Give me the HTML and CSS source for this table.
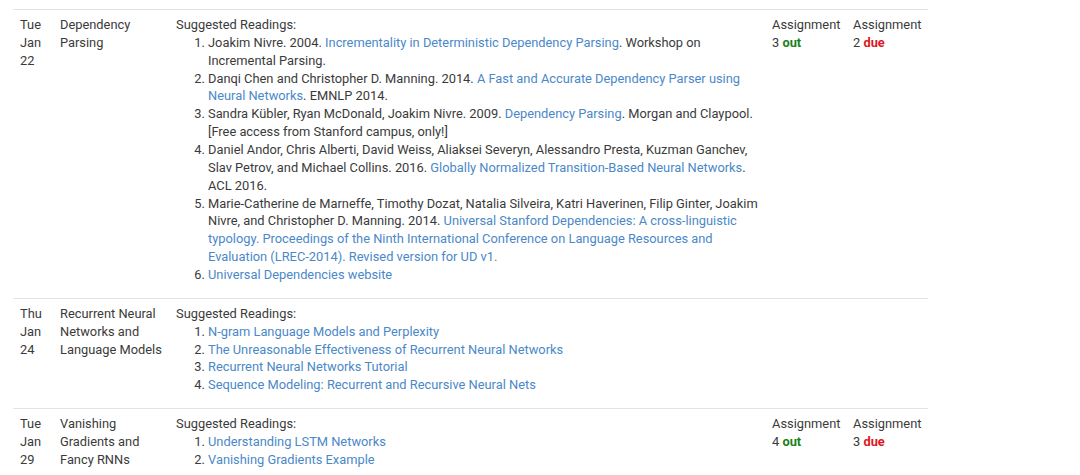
FILE: index.html
```html
<!DOCTYPE html>
<html>
<head>
<meta charset="utf-8">
<link rel="stylesheet" href="styles.css">
</head>
<body>
<div class="page">
<table class="schedule">
  <colgroup>
    <col class="c-date"><col class="c-topic"><col class="c-read"><col class="c-out"><col class="c-due">
  </colgroup>
  <tr>
    <td>Tue<br>Jan<br>22</td>
    <td>Dependency Parsing</td>
    <td>Suggested Readings:
      <ol>
        <li>Joakim Nivre. 2004. <a href="#">Incrementality in Deterministic Dependency Parsing</a>. Workshop on Incremental Parsing.</li>
        <li>Danqi Chen and Christopher D. Manning. 2014. <a href="#">A Fast and Accurate Dependency Parser using Neural Networks</a>. EMNLP 2014.</li>
        <li>Sandra Kübler, Ryan McDonald, Joakim Nivre. 2009. <a href="#">Dependency Parsing</a>. Morgan and Claypool. [Free access from Stanford campus, only!]</li>
        <li>Daniel Andor, Chris Alberti, David Weiss, Aliaksei Severyn, Alessandro Presta, Kuzman Ganchev, Slav Petrov, and Michael Collins. 2016. <a href="#">Globally Normalized Transition-Based Neural Networks</a>. ACL 2016.</li>
        <li>Marie-Catherine de Marneffe, Timothy Dozat, Natalia Silveira, Katri Haverinen, Filip Ginter, Joakim Nivre, and Christopher D. Manning. 2014. <a href="#">Universal Stanford Dependencies: A cross-linguistic typology. Proceedings of the Ninth International Conference on Language Resources and Evaluation (LREC-2014). Revised version for UD v1.</a></li>
        <li><a href="#">Universal Dependencies website</a></li>
      </ol>
    </td>
    <td>Assignment<br>3 <b class="out">out</b></td>
    <td>Assignment<br>2 <b class="due">due</b></td>
  </tr>
  <tr>
    <td>Thu<br>Jan<br>24</td>
    <td>Recurrent Neural Networks and Language Models</td>
    <td>Suggested Readings:
      <ol>
        <li><a href="#">N-gram Language Models and Perplexity</a></li>
        <li><a href="#">The Unreasonable Effectiveness of Recurrent Neural Networks</a></li>
        <li><a href="#">Recurrent Neural Networks Tutorial</a></li>
        <li><a href="#">Sequence Modeling: Recurrent and Recursive Neural Nets</a></li>
      </ol>
    </td>
    <td></td>
    <td></td>
  </tr>
  <tr>
    <td>Tue<br>Jan<br>29</td>
    <td>Vanishing Gradients and Fancy RNNs</td>
    <td>Suggested Readings:
      <ol>
        <li><a href="#">Understanding LSTM Networks</a></li>
        <li><a href="#">Vanishing Gradients Example</a></li>
      </ol>
    </td>
    <td>Assignment<br>4 <b class="out">out</b></td>
    <td>Assignment<br>3 <b class="due">due</b></td>
  </tr>
</table>
</div>
</body>
</html>
```

FILE: styles.css
```css
html, body {
  margin: 0;
  padding: 0;
  background: #fff;
}
.page {
  padding: 9px 0 0 13px;
  font-family: Roboto, "Liberation Sans", sans-serif;
  font-size: 12.85px;
  line-height: 17.86px;
  color: #3a3a3a;
}
.schedule {
  border-collapse: collapse;
  table-layout: fixed;
  width: 915px;
}
.c-date { width: 40px; }
.c-topic { width: 116px; }
.c-read { width: 596px; }
.c-out { width: 81px; }
.c-due { width: 82px; }
.schedule td {
  vertical-align: top;
  padding: 6px 7px 4px;
  border-top: 1px solid #e3e3e3;
}
.schedule ol {
  margin: 0 0 10px 0;
  padding-left: 32px;
}
.schedule a {
  color: #4a88c8;
  text-decoration: none;
}
.out { color: #1a7f1a; font-weight: bold; }
.due { color: #e0161e; font-weight: bold; }
```
